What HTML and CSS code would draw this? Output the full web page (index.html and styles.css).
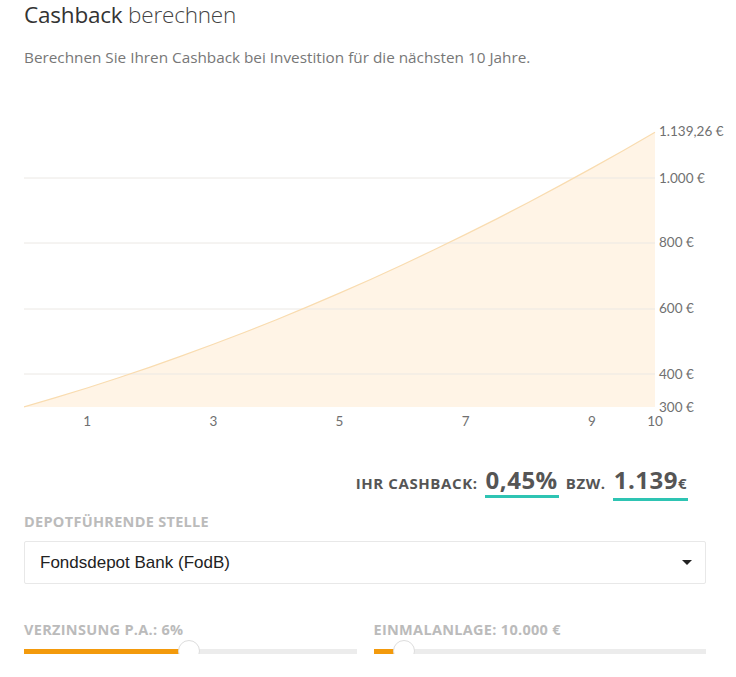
FILE: index.html
```html
<!DOCTYPE html>
<html lang="de">
<head>
<meta charset="utf-8">
<title>Cashback berechnen</title>
<link rel="stylesheet" href="styles.css">
</head>
<body>
<div class="page">
  <h1 class="title"><span class="title-strong">Cashback</span> berechnen</h1>
  <p class="subtitle">Berechnen Sie Ihren Cashback bei Investition für die nächsten 10 Jahre.</p>

  <svg class="chart" width="712" height="312" viewBox="0 0 712 312">
    <path class="area" d="M0,287 L31.55,277.7 L63.1,268 L94.65,257.8 L126.2,247.1 L157.75,235.9 L189.3,224.3 L220.85,212.2 L252.4,199.7 L283.95,186.6 L315.5,173.1 L347.05,159.2 L378.6,144.7 L410.15,129.8 L441.7,114.4 L473.25,98.6 L504.8,82.2 L536.35,65.4 L567.9,48.1 L599.45,30.4 L631,12.2 L631,287 Z"/>
    <g class="grid">
      <line x1="0" y1="58" x2="631" y2="58"/>
      <line x1="0" y1="123" x2="631" y2="123"/>
      <line x1="0" y1="189" x2="631" y2="189"/>
      <line x1="0" y1="254" x2="631" y2="254"/>
    </g>
    <path class="line" d="M0,287 L31.55,277.7 L63.1,268 L94.65,257.8 L126.2,247.1 L157.75,235.9 L189.3,224.3 L220.85,212.2 L252.4,199.7 L283.95,186.6 L315.5,173.1 L347.05,159.2 L378.6,144.7 L410.15,129.8 L441.7,114.4 L473.25,98.6 L504.8,82.2 L536.35,65.4 L567.9,48.1 L599.45,30.4 L631,12.2"/>
    <g class="ylabels">
      <text x="635" y="16">1.139,26 €</text>
      <text x="635" y="63">1.000 €</text>
      <text x="635" y="127">800 €</text>
      <text x="635" y="193">600 €</text>
      <text x="635" y="259">400 €</text>
      <text x="635" y="292">300 €</text>
    </g>
    <g class="xlabels">
      <text x="63.1" y="306">1</text>
      <text x="189.3" y="306">3</text>
      <text x="315.5" y="306">5</text>
      <text x="441.7" y="306">7</text>
      <text x="567.9" y="306">9</text>
      <text x="631" y="306">10</text>
    </g>
  </svg>

  <div class="result">
    <span class="result-label">Ihr Cashback:</span>
    <span class="result-value">0,45%</span>
    <span class="result-label">bzw.</span>
    <span class="result-value">1.139<span class="euro">€</span></span>
  </div>

  <div class="field-label">Depotführende Stelle</div>
  <div class="select">
    <span class="select-text">Fondsdepot Bank (FodB)</span>
    <span class="caret"></span>
  </div>

  <div class="sliders">
    <div class="slider">
      <div class="field-label">Verzinsung p.a.: 6%</div>
      <div class="track">
        <div class="fill" style="width: 165px"></div>
        <div class="handle"></div>
      </div>
    </div>
    <div class="slider">
      <div class="field-label">Einmalanlage: 10.000 €</div>
      <div class="track">
        <div class="fill" style="width: 30px"></div>
        <div class="handle"></div>
      </div>
    </div>
  </div>
</div>
</body>
</html>
```

FILE: styles.css
```css
html, body {
  margin: 0;
  padding: 0;
  background: #ffffff;
}

.page {
  padding: 0 30px 0 24px;
  width: 736px;
  box-sizing: border-box;
  display: flex;
  flex-direction: column;
  font-family: "Open Sans", "Liberation Sans", sans-serif;
}

.title {
  margin: 0;
  height: 30px;
  line-height: 30px;
  font-size: 22.5px;
  font-weight: 300;
  color: #444;
  letter-spacing: -0.2px;
}

.title-strong {
  font-weight: 400;
  color: #333;
}

.subtitle {
  margin: 17px 0 0;
  line-height: 20px;
  font-size: 15.3px;
  color: #777;
  font-weight: 400;
  letter-spacing: 0;
}

.chart {
  display: block;
  margin-top: 53px;
  margin-right: -30px;
}

.grid line {
  stroke: #ebe8e4;
  stroke-width: 1;
}

.area {
  fill: #fff4e6;
}

.line {
  fill: none;
  stroke: #f9dcb0;
  stroke-width: 1.2;
}

.ylabels text,
.xlabels text {
  font-family: "Lato", "Open Sans", sans-serif;
  font-size: 13.5px;
  font-weight: 400;
  fill: #707070;
}

.xlabels text {
  text-anchor: middle;
}

.result {
  margin-top: 33px;
  display: flex;
  justify-content: flex-end;
  align-items: baseline;
  gap: 7px;
  padding-right: 18px;
  font-family: "Open Sans", sans-serif;
  color: #555;
}

.result-label {
  font-size: 15px;
  font-weight: 700;
  text-transform: uppercase;
  letter-spacing: 0.6px;
}

.result-value {
  font-size: 24px;
  font-weight: 700;
  border-bottom: 3px solid #2ec4b3;
  line-height: 30px;
  padding: 0 1px;
  letter-spacing: 0.5px;
}

.euro {
  font-size: 15px;
}

.field-label {
  font-size: 14.5px;
  font-weight: 700;
  color: #bbbbbb;
  text-transform: uppercase;
  line-height: 16px;
  letter-spacing: 0.3px;
}

.result + .field-label {
  margin-top: 13px;
}

.select {
  margin-top: 11px;
  height: 43px;
  box-sizing: border-box;
  border: 1px solid #e8e8e8;
  border-radius: 2px;
  display: flex;
  align-items: center;
  justify-content: space-between;
  padding: 0 13px 0 15px;
}

.select-text {
  font-family: "Liberation Sans", Arial, sans-serif;
  font-size: 17px;
  color: #222;
}

.caret {
  width: 0;
  height: 0;
  border-left: 5px solid transparent;
  border-right: 5px solid transparent;
  border-top: 5px solid #222;
}

.sliders {
  margin-top: 38px;
  display: grid;
  grid-template-columns: 1fr 1fr;
  gap: 17px;
}

.slider {
  display: flex;
  flex-direction: column;
}

.track {
  position: relative;
  margin-top: 11px;
  height: 5px;
  background: #ececec;
}

.fill {
  height: 5px;
  background: #f39a0c;
}

.slider:first-child .handle {
  left: 154px;
}

.slider:last-child .handle {
  left: 19px;
}

.handle {
  position: absolute;
  top: -9px;
  width: 22px;
  height: 22px;
  box-sizing: border-box;
  border-radius: 50%;
  background: #fff;
  border: 1px solid #dddddd;
}
```
